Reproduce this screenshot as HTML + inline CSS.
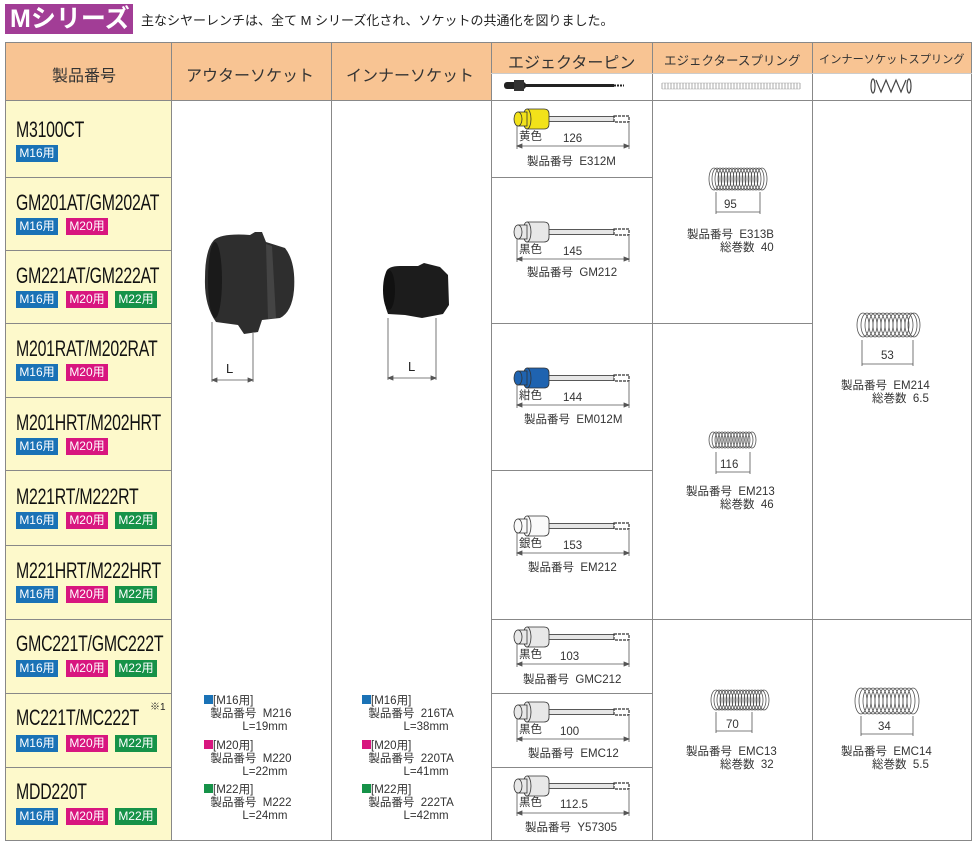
<!DOCTYPE html>
<html><head><meta charset="utf-8"><style>
*{margin:0;padding:0;box-sizing:border-box}
body{width:976px;height:844px;background:#fff;position:relative;overflow:hidden;font-family:"Liberation Sans","Noto Sans CJK JP",sans-serif;color:#222}
.a{position:absolute;white-space:nowrap}
.hd{font-size:16px;color:#333}
.nm{font-size:22px;color:#111;transform:scaleX(.72);transform-origin:left top;letter-spacing:-.3px}
.b{position:absolute;height:17px;width:42px;color:#fff;font-size:12px;line-height:17px;text-align:center}
.bl{background:#1a72b6}.mg{background:#d8167f}.gr{background:#169248}
.s{font-size:11.5px;color:#333;line-height:13px}
</style></head><body>
<div class="a" style="left:5px;top:4px;width:128px;height:30px;background:#a23d96"></div>
<div class="a" style="left:10px;top:3px;color:#fff;font-size:25px;font-weight:bold;line-height:32px">Mシリーズ</div>
<div class="a" style="left:141px;top:10px;font-size:13px;color:#222">主なシヤーレンチは、全て M シリーズ化され、ソケットの共通化を図りました。</div>

<svg class="a" style="left:0;top:0" width="976" height="844">
<defs>
<symbol id="pin" overflow="visible">
<rect x="548" y="-2.5" width="66" height="5" fill="#e6e6e6" stroke="#333" stroke-width=".8"/>
<rect x="614" y="-3" width="15" height="6" fill="#fff" stroke="#333" stroke-width="1.2" stroke-dasharray="3 1"/>
<path d="M527 -10 H544 Q549 -10 549 -5 V5 Q549 10 544 10 H527 Z" fill="currentColor" stroke="#333" stroke-width=".8"/>
<ellipse cx="527" cy="0" rx="4" ry="10" fill="currentColor" stroke="#333" stroke-width=".8"/>
<rect x="518" y="-7" width="9" height="14" fill="currentColor" stroke="#333" stroke-width=".8"/>
<ellipse cx="518" cy="0" rx="4" ry="7" fill="currentColor" stroke="#333" stroke-width=".8"/>
<path d="M517 6 V30 M629 4 V30 M517 27 H629 M517 27 l5 -2 v4 z M629 27 l-5 -2 v4 z" stroke="#555" stroke-width=".8" fill="#555"/>
</symbol>
</defs>
<rect x="5" y="42" width="967" height="58" fill="#f8c493"/>
<rect x="491" y="73" width="481" height="27" fill="#fff"/>
<rect x="5" y="100" width="166" height="741" fill="#fdf9cb"/>
<g stroke="#888" stroke-width="1" fill="none">
<rect x="5.5" y="42.5" width="966" height="798"/>
<line x1="171.5" y1="42" x2="171.5" y2="841"/><line x1="331.5" y1="42" x2="331.5" y2="841"/>
<line x1="491.5" y1="42" x2="491.5" y2="841"/><line x1="652.5" y1="42" x2="652.5" y2="841"/>
<line x1="812.5" y1="42" x2="812.5" y2="841"/>
<line x1="5" y1="100.5" x2="972" y2="100.5"/>
<line x1="491" y1="73.5" x2="972" y2="73.5" stroke="#ccc"/>
<path d="M5 177.5H171M5 250.5H171M5 323.5H171M5 397.5H171M5 470.5H171M5 545.5H171M5 619.5H171M5 693.5H171M5 767.5H171"/>
<path d="M491 177.5H652M491 323.5H812M491 470.5H652M491 619.5H972M491 693.5H652M491 767.5H652"/>
</g>
<rect x="504" y="82" width="22" height="7" rx="3" fill="#222"/><rect x="514" y="80" width="10" height="11" fill="#333"/>
<rect x="524" y="84" width="90" height="3" fill="#222"/><path d="M614 85.5h10" stroke="#222" stroke-width="2" stroke-dasharray="2 1"/>
<path d="M662 83 h138 M662 89 h138" stroke="#aaa" stroke-width=".6"/>
<path d="M662 83 V89 M665 83 V89 M668 83 V89 M671 83 V89 M674 83 V89 M677 83 V89 M680 83 V89 M683 83 V89 M686 83 V89 M689 83 V89 M692 83 V89 M695 83 V89 M698 83 V89 M701 83 V89 M704 83 V89 M707 83 V89 M710 83 V89 M713 83 V89 M716 83 V89 M719 83 V89 M722 83 V89 M725 83 V89 M728 83 V89 M731 83 V89 M734 83 V89 M737 83 V89 M740 83 V89 M743 83 V89 M746 83 V89 M749 83 V89 M752 83 V89 M755 83 V89 M758 83 V89 M761 83 V89 M764 83 V89 M767 83 V89 M770 83 V89 M773 83 V89 M776 83 V89 M779 83 V89 M782 83 V89 M785 83 V89 M788 83 V89 M791 83 V89 M794 83 V89 M797 83 V89 M800 83 V89" stroke="#888" stroke-width=".7"/>
<g stroke="#444" stroke-width="1.2" fill="none">
<ellipse cx="873" cy="86" rx="2" ry="7"/><path d="M876 80 L881 92 L886 80 L891 92 L896 80 L901 92 L906 80"/><ellipse cx="909" cy="86" rx="2" ry="7"/>
</g>
<path d="M214 240 Q222 233 250 235 L255 232 L262 232 L266 242 L285 248 Q296 262 294 290 Q292 312 280 318 L262 320 L258 332 L244 334 L238 325 L216 322 Q204 305 205 278 Q205 250 214 240 Z" fill="#2e2e2e"/>
<path d="M266 244 L272 246 L276 318 L268 319 Z" fill="#444"/>
<ellipse cx="215" cy="280" rx="7" ry="38" fill="#1a1a1a"/>
<path d="M386 272 Q388 266 400 266 L418 266 L424 263 L440 267 L448 275 L449 305 L443 314 L422 318 L405 315 L388 314 Q380 294 386 272 Z" fill="#1c1c1c"/>
<ellipse cx="389" cy="290" rx="6" ry="20" fill="#111"/>
<path d="M212 322V382M253 333V382M212 380H253M212 380l5 -2v4zM253 380l-5 -2v4zM388 318V380M436 318V380M388 378H436M388 378l5 -2v4zM436 378l-5 -2v4z" stroke="#555" stroke-width=".8" fill="#555"/>
<use href="#pin" y="119" style="color:#f2e21a"/>
<use href="#pin" y="232" style="color:#e8e8e8"/>
<use href="#pin" y="378" style="color:#1f63b0"/>
<use href="#pin" y="526" style="color:#fafafa"/>
<use href="#pin" y="637" style="color:#e8e8e8"/>
<use href="#pin" y="712" style="color:#e8e8e8"/>
<use href="#pin" y="786" style="color:#e8e8e8"/>
<g fill="none" stroke="#555" stroke-width=".8">
<ellipse cx="714" cy="179" rx="5" ry="11"/><ellipse cx="717" cy="179" rx="5" ry="11"/><ellipse cx="720" cy="179" rx="5" ry="11"/><ellipse cx="723" cy="179" rx="5" ry="11"/><ellipse cx="726" cy="179" rx="5" ry="11"/><ellipse cx="729" cy="179" rx="5" ry="11"/><ellipse cx="732" cy="179" rx="5" ry="11"/><ellipse cx="735" cy="179" rx="5" ry="11"/><ellipse cx="738" cy="179" rx="5" ry="11"/><ellipse cx="741" cy="179" rx="5" ry="11"/><ellipse cx="744" cy="179" rx="5" ry="11"/><ellipse cx="747" cy="179" rx="5" ry="11"/><ellipse cx="750" cy="179" rx="5" ry="11"/><ellipse cx="753" cy="179" rx="5" ry="11"/><ellipse cx="756" cy="179" rx="5" ry="11"/><ellipse cx="759" cy="179" rx="5" ry="11"/><ellipse cx="762" cy="179" rx="5" ry="11"/>
<ellipse cx="713" cy="440" rx="4" ry="8"/><ellipse cx="716" cy="440" rx="4" ry="8"/><ellipse cx="719" cy="440" rx="4" ry="8"/><ellipse cx="722" cy="440" rx="4" ry="8"/><ellipse cx="725" cy="440" rx="4" ry="8"/><ellipse cx="728" cy="440" rx="4" ry="8"/><ellipse cx="731" cy="440" rx="4" ry="8"/><ellipse cx="734" cy="440" rx="4" ry="8"/><ellipse cx="737" cy="440" rx="4" ry="8"/><ellipse cx="740" cy="440" rx="4" ry="8"/><ellipse cx="743" cy="440" rx="4" ry="8"/><ellipse cx="746" cy="440" rx="4" ry="8"/><ellipse cx="749" cy="440" rx="4" ry="8"/><ellipse cx="752" cy="440" rx="4" ry="8"/>
<ellipse cx="716" cy="700" rx="5" ry="10"/><ellipse cx="719" cy="700" rx="5" ry="10"/><ellipse cx="722" cy="700" rx="5" ry="10"/><ellipse cx="725" cy="700" rx="5" ry="10"/><ellipse cx="728" cy="700" rx="5" ry="10"/><ellipse cx="731" cy="700" rx="5" ry="10"/><ellipse cx="734" cy="700" rx="5" ry="10"/><ellipse cx="737" cy="700" rx="5" ry="10"/><ellipse cx="740" cy="700" rx="5" ry="10"/><ellipse cx="743" cy="700" rx="5" ry="10"/><ellipse cx="746" cy="700" rx="5" ry="10"/><ellipse cx="749" cy="700" rx="5" ry="10"/><ellipse cx="752" cy="700" rx="5" ry="10"/><ellipse cx="755" cy="700" rx="5" ry="10"/><ellipse cx="758" cy="700" rx="5" ry="10"/><ellipse cx="761" cy="700" rx="5" ry="10"/><ellipse cx="764" cy="700" rx="5" ry="10"/>
<ellipse cx="863" cy="325" rx="6" ry="12"/><ellipse cx="867" cy="325" rx="6" ry="12"/><ellipse cx="871" cy="325" rx="6" ry="12"/><ellipse cx="875" cy="325" rx="6" ry="12"/><ellipse cx="879" cy="325" rx="6" ry="12"/><ellipse cx="883" cy="325" rx="6" ry="12"/><ellipse cx="887" cy="325" rx="6" ry="12"/><ellipse cx="891" cy="325" rx="6" ry="12"/><ellipse cx="895" cy="325" rx="6" ry="12"/><ellipse cx="899" cy="325" rx="6" ry="12"/><ellipse cx="903" cy="325" rx="6" ry="12"/><ellipse cx="907" cy="325" rx="6" ry="12"/><ellipse cx="911" cy="325" rx="6" ry="12"/><ellipse cx="914" cy="325" rx="6" ry="12"/>
<ellipse cx="861" cy="701" rx="6" ry="13"/><ellipse cx="865" cy="701" rx="6" ry="13"/><ellipse cx="869" cy="701" rx="6" ry="13"/><ellipse cx="873" cy="701" rx="6" ry="13"/><ellipse cx="877" cy="701" rx="6" ry="13"/><ellipse cx="881" cy="701" rx="6" ry="13"/><ellipse cx="885" cy="701" rx="6" ry="13"/><ellipse cx="889" cy="701" rx="6" ry="13"/><ellipse cx="893" cy="701" rx="6" ry="13"/><ellipse cx="897" cy="701" rx="6" ry="13"/><ellipse cx="901" cy="701" rx="6" ry="13"/><ellipse cx="905" cy="701" rx="6" ry="13"/><ellipse cx="909" cy="701" rx="6" ry="13"/><ellipse cx="913" cy="701" rx="6" ry="13"/>
</g>
<path d="M716 192V214M760 192V214M716 212H760M716 452V474M750 452V474M716 472H750M716 712V733M752 712V733M716 731H752M862 340V366M913 340V366M862 364H913M861 716V736M913 716V736M861 734H913" stroke="#555" stroke-width=".8"/>
</svg>

<div class="a hd" style="left:52px;top:62px">製品番号</div>
<div class="a hd" style="left:186px;top:62px">アウターソケット</div>
<div class="a hd" style="left:346px;top:62px">インナーソケット</div>
<div class="a hd" style="left:508px;top:49px">エジェクターピン</div>
<div class="a" style="left:664px;top:50px;font-size:12.5px;color:#333">エジェクタースプリング</div>
<div class="a" style="left:819px;top:51px;font-size:11.2px;color:#333">インナーソケットスプリング</div>

<div class="a nm" style="left:16px;top:117px">M3100CT</div>
<div class="b bl" style="left:16px;top:145px">M16用</div>
<div class="a nm" style="left:16px;top:190px">GM201AT/GM202AT</div>
<div class="b bl" style="left:16px;top:218px">M16用</div><div class="b mg" style="left:66px;top:218px">M20用</div>
<div class="a nm" style="left:16px;top:263px">GM221AT/GM222AT</div>
<div class="b bl" style="left:16px;top:291px">M16用</div><div class="b mg" style="left:66px;top:291px">M20用</div><div class="b gr" style="left:115px;top:291px">M22用</div>
<div class="a nm" style="left:16px;top:336px">M201RAT/M202RAT</div>
<div class="b bl" style="left:16px;top:364px">M16用</div><div class="b mg" style="left:66px;top:364px">M20用</div>
<div class="a nm" style="left:16px;top:410px">M201HRT/M202HRT</div>
<div class="b bl" style="left:16px;top:438px">M16用</div><div class="b mg" style="left:66px;top:438px">M20用</div>
<div class="a nm" style="left:16px;top:484px">M221RT/M222RT</div>
<div class="b bl" style="left:16px;top:512px">M16用</div><div class="b mg" style="left:66px;top:512px">M20用</div><div class="b gr" style="left:115px;top:512px">M22用</div>
<div class="a nm" style="left:16px;top:558px">M221HRT/M222HRT</div>
<div class="b bl" style="left:16px;top:586px">M16用</div><div class="b mg" style="left:66px;top:586px">M20用</div><div class="b gr" style="left:115px;top:586px">M22用</div>
<div class="a nm" style="left:16px;top:631px">GMC221T/GMC222T</div>
<div class="b bl" style="left:16px;top:660px">M16用</div><div class="b mg" style="left:66px;top:660px">M20用</div><div class="b gr" style="left:115px;top:660px">M22用</div>
<div class="a nm" style="left:16px;top:705px">MC221T/MC222T</div>
<div class="a" style="left:150px;top:698px;font-size:10px">※1</div>
<div class="b bl" style="left:16px;top:735px">M16用</div><div class="b mg" style="left:66px;top:735px">M20用</div><div class="b gr" style="left:115px;top:735px">M22用</div>
<div class="a nm" style="left:16px;top:779px">MDD220T</div>
<div class="b bl" style="left:16px;top:808px">M16用</div><div class="b mg" style="left:66px;top:808px">M20用</div><div class="b gr" style="left:115px;top:808px">M22用</div>

<div class="a" style="left:226px;top:361px;font-size:13px">L</div>
<div class="a" style="left:408px;top:359px;font-size:13px">L</div>
<div class="a s" style="left:204px;top:695px"><span style="display:inline-block;width:9px;height:9px;background:#1a72b6"></span>[M16用]<br>&nbsp;&nbsp;製品番号&nbsp; M216<br>&nbsp;&nbsp;&nbsp;&nbsp;&nbsp;&nbsp;&nbsp;&nbsp;&nbsp;&nbsp;&nbsp;&nbsp;L=19mm</div>
<div class="a s" style="left:204px;top:740px"><span style="display:inline-block;width:9px;height:9px;background:#d8167f"></span>[M20用]<br>&nbsp;&nbsp;製品番号&nbsp; M220<br>&nbsp;&nbsp;&nbsp;&nbsp;&nbsp;&nbsp;&nbsp;&nbsp;&nbsp;&nbsp;&nbsp;&nbsp;L=22mm</div>
<div class="a s" style="left:204px;top:784px"><span style="display:inline-block;width:9px;height:9px;background:#169248"></span>[M22用]<br>&nbsp;&nbsp;製品番号&nbsp; M222<br>&nbsp;&nbsp;&nbsp;&nbsp;&nbsp;&nbsp;&nbsp;&nbsp;&nbsp;&nbsp;&nbsp;&nbsp;L=24mm</div>
<div class="a s" style="left:362px;top:695px"><span style="display:inline-block;width:9px;height:9px;background:#1a72b6"></span>[M16用]<br>&nbsp;&nbsp;製品番号&nbsp; 216TA<br>&nbsp;&nbsp;&nbsp;&nbsp;&nbsp;&nbsp;&nbsp;&nbsp;&nbsp;&nbsp;&nbsp;&nbsp;&nbsp;L=38mm</div>
<div class="a s" style="left:362px;top:740px"><span style="display:inline-block;width:9px;height:9px;background:#d8167f"></span>[M20用]<br>&nbsp;&nbsp;製品番号&nbsp; 220TA<br>&nbsp;&nbsp;&nbsp;&nbsp;&nbsp;&nbsp;&nbsp;&nbsp;&nbsp;&nbsp;&nbsp;&nbsp;&nbsp;L=41mm</div>
<div class="a s" style="left:362px;top:784px"><span style="display:inline-block;width:9px;height:9px;background:#169248"></span>[M22用]<br>&nbsp;&nbsp;製品番号&nbsp; 222TA<br>&nbsp;&nbsp;&nbsp;&nbsp;&nbsp;&nbsp;&nbsp;&nbsp;&nbsp;&nbsp;&nbsp;&nbsp;&nbsp;L=42mm</div>

<div class="a s" style="left:519px;top:131px">黄色</div><div class="a s" style="left:563px;top:133px">126</div>
<div class="a s" style="left:527px;top:156px">製品番号&nbsp; E312M</div>
<div class="a s" style="left:519px;top:244px">黒色</div><div class="a s" style="left:563px;top:246px">145</div>
<div class="a s" style="left:527px;top:267px">製品番号&nbsp; GM212</div>
<div class="a s" style="left:519px;top:390px">紺色</div><div class="a s" style="left:563px;top:392px">144</div>
<div class="a s" style="left:524px;top:414px">製品番号&nbsp; EM012M</div>
<div class="a s" style="left:519px;top:538px">銀色</div><div class="a s" style="left:563px;top:540px">153</div>
<div class="a s" style="left:528px;top:562px">製品番号&nbsp; EM212</div>
<div class="a s" style="left:519px;top:649px">黒色</div><div class="a s" style="left:560px;top:651px">103</div>
<div class="a s" style="left:523px;top:674px">製品番号&nbsp; GMC212</div>
<div class="a s" style="left:519px;top:724px">黒色</div><div class="a s" style="left:560px;top:726px">100</div>
<div class="a s" style="left:528px;top:748px">製品番号&nbsp; EMC12</div>
<div class="a s" style="left:519px;top:797px">黒色</div><div class="a s" style="left:560px;top:799px">112.5</div>
<div class="a s" style="left:525px;top:822px">製品番号&nbsp; Y57305</div>

<div class="a s" style="left:724px;top:199px">95</div>
<div class="a s" style="left:687px;top:229px">製品番号&nbsp; E313B</div><div class="a s" style="left:720px;top:242px">総巻数&nbsp; 40</div>
<div class="a s" style="left:720px;top:459px">116</div>
<div class="a s" style="left:686px;top:486px">製品番号&nbsp; EM213</div><div class="a s" style="left:720px;top:499px">総巻数&nbsp; 46</div>
<div class="a s" style="left:726px;top:719px">70</div>
<div class="a s" style="left:686px;top:746px">製品番号&nbsp; EMC13</div><div class="a s" style="left:720px;top:759px">総巻数&nbsp; 32</div>
<div class="a s" style="left:881px;top:350px">53</div>
<div class="a s" style="left:841px;top:380px">製品番号&nbsp; EM214</div><div class="a s" style="left:872px;top:393px">総巻数&nbsp; 6.5</div>
<div class="a s" style="left:878px;top:721px">34</div>
<div class="a s" style="left:841px;top:746px">製品番号&nbsp; EMC14</div><div class="a s" style="left:872px;top:759px">総巻数&nbsp; 5.5</div>
</body></html>
